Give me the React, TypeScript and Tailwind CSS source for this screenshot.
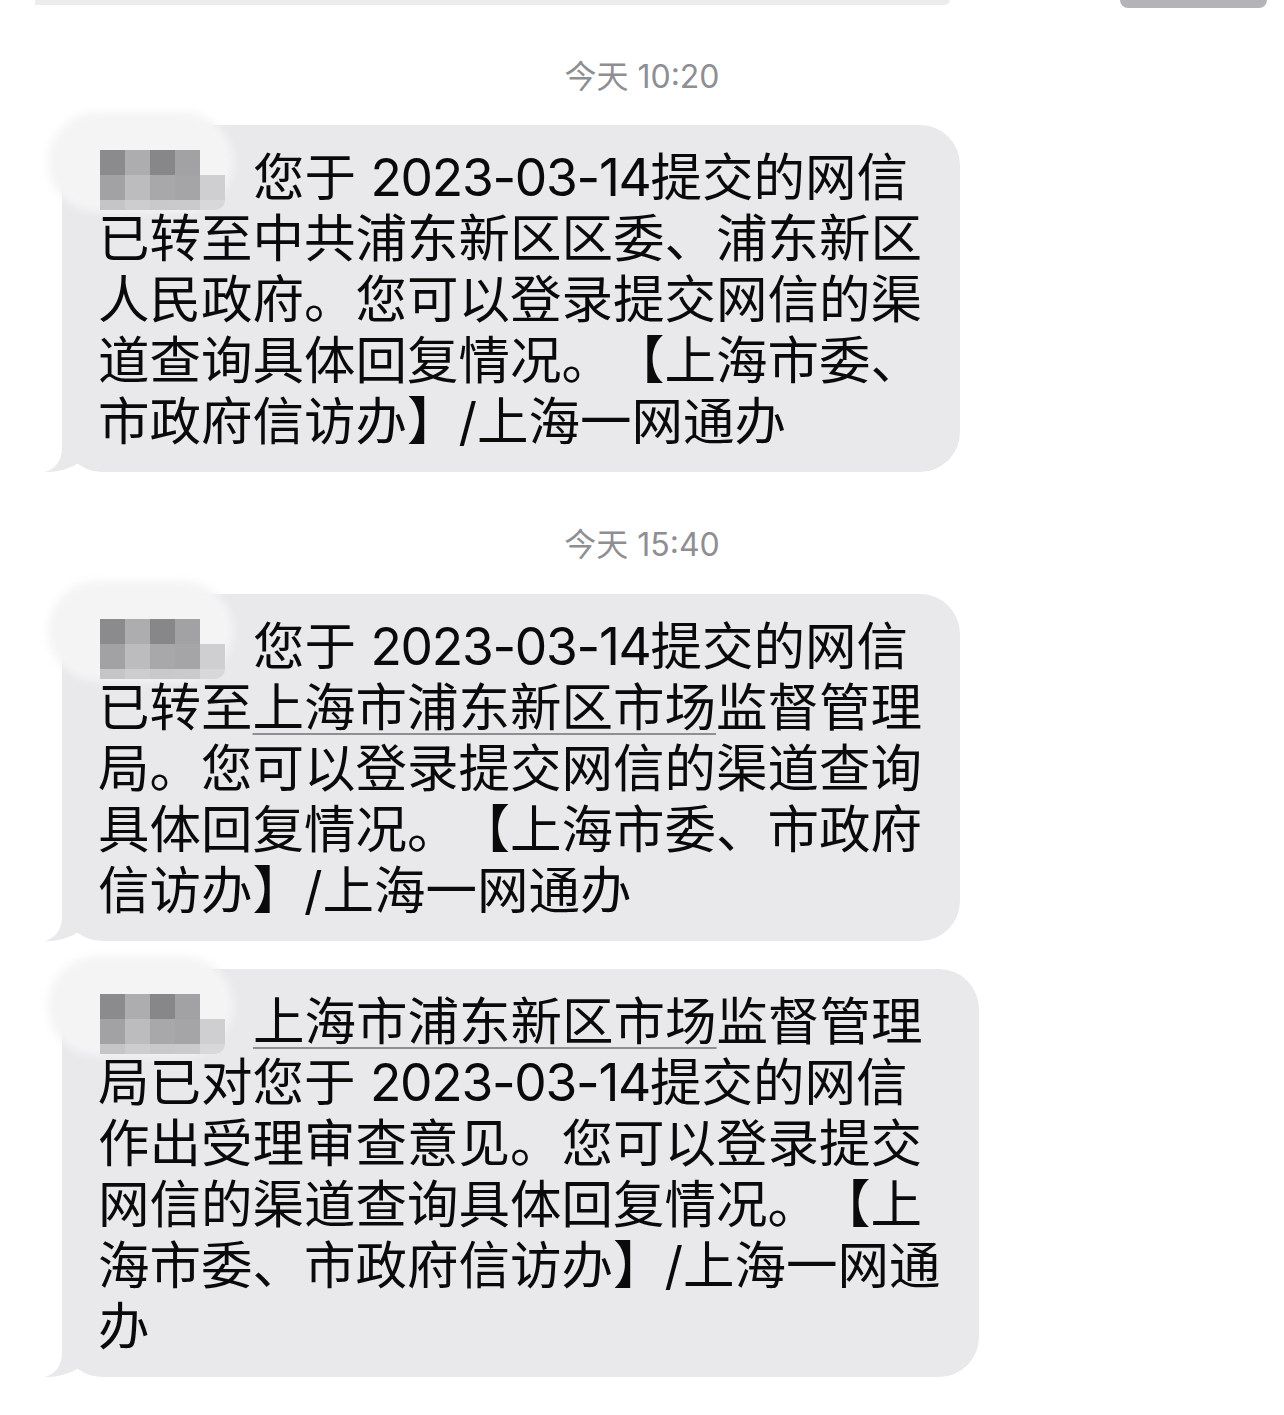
import React from "react";

const FONT = { fontFamily: 'Inter, "Noto Sans CJK SC", "Noto Sans", sans-serif' };

function Tail() {
  return (
    <svg
      className="absolute left-[-17px] bottom-0"
      width="66"
      height="40"
      viewBox="0 0 66 40"
    >
      <path
        d="M17 0 L17 16 C17 29 10 37 0 40 C12 40.5 26 36.5 35 30 C43 37 53 40 66 40 L66 0 Z"
        fill="#e9e9eb"
      />
    </svg>
  );
}

const mosaicColors = [
  ["#8b8b8d", "#adadaf", "#878789", "#a2a2a4", "transparent"],
  ["#a2a2a4", "#bcbcbe", "#a8a8aa", "#a5a5a7", "#cfcfd1"],
  ["#c5c5c7", "#cdcdcf", "#c9c9cb", "#cacacc", "#d8d8da"],
];

function Mosaic() {
  return (
    <span className="relative inline-block align-top w-[155px] h-[61px]">
      <span className="absolute left-[-50px] top-[-35px] w-[185px] h-[100px] rounded-[50px] bg-[#f4f4f5] blur-[4px]" />
      <span className="absolute left-[2px] top-[3px] grid grid-cols-[25px_25px_25px_25px_25px] grid-rows-[25px_25px_10px]">
        {mosaicColors.flatMap((row, r) =>
          row.map((c, i) => (
            <span
              key={r + "-" + i}
              className={
                r === 2 && i === 4 ? "block rounded-br-[10px]" : "block"
              }
              style={{ backgroundColor: c }}
            />
          ))
        )}
      </span>
    </span>
  );
}

function U({ children }: { children: React.ReactNode }) {
  return (
    <span className="underline decoration-[#8f8f93] decoration-2 underline-offset-[7px]">
      {children}
    </span>
  );
}

function D() {
  return <span className="tracking-[-1.3px]">2023-03-14</span>;
}

function Bubble({ lines }: { lines: React.ReactNode[] }) {
  return (
    <div className="relative ml-[62px] w-fit rounded-[40px] bg-[#e9e9eb] pl-[36px] pr-[38px] pt-[22px] pb-[20px] text-[51.5px] leading-[61px] text-[#0a0a0a] [text-spacing-trim:space-all]">
      <Tail />
      {lines.map((l, i) => (
        <div key={i} className="relative whitespace-nowrap">
          {l}
        </div>
      ))}
    </div>
  );
}

function Stamp({ text }: { text: string }) {
  return (
    <div className="text-center text-[32px] leading-[36px] text-[#8e8e93]">
      {text}
    </div>
  );
}

export default function App() {
  return (
    <div
      className="relative w-[1284px] h-[1415px] overflow-hidden bg-white"
      style={FONT}
    >
      <div className="flex h-[8px] items-start justify-between">
        <div className="ml-[35px] h-[5px] w-[915px] rounded-br-[40px] bg-[#ececee]" />
        <div className="mr-[17px] h-[8px] w-[147px] rounded-b-[20px] bg-[#b4b4b6]" />
      </div>

      <div className="mt-[51px]">
        <Stamp text="今天 10:20" />
      </div>

      <div className="mt-[30px]">
        <Bubble
          lines={[
            <>
              <Mosaic />
              您于 <D />提交的网信
            </>,
            "已转至中共浦东新区区委、浦东新区",
            "人民政府。您可以登录提交网信的渠",
            "道查询具体回复情况。【上海市委、",
            "市政府信访办】/上海一网通办",
          ]}
        />
      </div>

      <div className="mt-[55px]">
        <Stamp text="今天 15:40" />
      </div>

      <div className="mt-[31px]">
        <Bubble
          lines={[
            <>
              <Mosaic />
              您于 <D />提交的网信
            </>,
            <>
              已转至<U>上海市浦东新区市场</U>监督管理
            </>,
            "局。您可以登录提交网信的渠道查询",
            "具体回复情况。【上海市委、市政府",
            "信访办】/上海一网通办",
          ]}
        />
      </div>

      <div className="mt-[28px]">
        <Bubble
          lines={[
            <>
              <Mosaic />
              <U>上海市浦东新区市场</U>监督管理
            </>,
            <>
              局已对您于 <D />提交的网信
            </>,
            "作出受理审查意见。您可以登录提交",
            "网信的渠道查询具体回复情况。【上",
            "海市委、市政府信访办】/上海一网通",
            "办",
          ]}
        />
      </div>
    </div>
  );
}
